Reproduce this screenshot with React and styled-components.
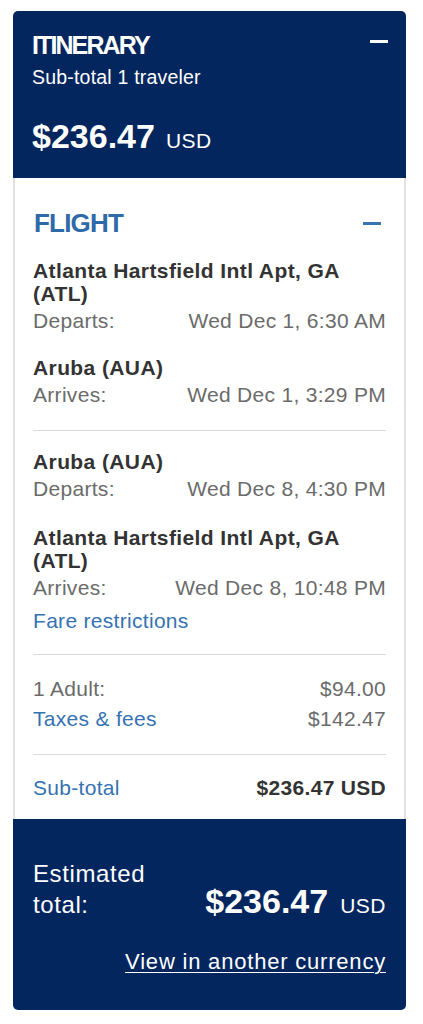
import React from "react";
import styled, { createGlobalStyle } from "styled-components";

const Global = createGlobalStyle`
  html, body { margin: 0; padding: 0; background: #ffffff; }
  body { font-family: "Liberation Sans", Arial, Helvetica, sans-serif; -webkit-font-smoothing: antialiased; }
`;

const NAVY = "#03265f";
const BLUE = "#3572b2";

const Page = styled.div`
  padding: 11px 17px 14px 13px;
`;

const Card = styled.div`
  width: 393px;
  border-radius: 5px;
  overflow: hidden;
  font-family: "Liberation Sans", Arial, Helvetica, sans-serif;
`;

const Header = styled.header`
  background: ${NAVY};
  color: #fff;
  padding: 20px 18px 22px 19px;
`;

const TitleRow = styled.div`
  display: flex;
  justify-content: space-between;
  align-items: flex-start;
`;

const Title = styled.h2`
  margin: 0;
  font-size: 25px;
  line-height: 28px;
  font-weight: 700;
  letter-spacing: -1.9px;
`;

const Minus = styled.span`
  display: block;
  width: 18px;
  height: 3px;
  margin-top: ${(p) => p.$top}px;
  margin-right: ${(p) => p.$right || 0}px;
  background: ${(p) => p.$color};
  flex: none;
`;

const Subtitle = styled.div`
  margin-top: 7px;
  font-size: 19.5px;
  line-height: 22px;
  letter-spacing: 0.2px;
`;

const PriceRow = styled.div`
  display: flex;
  align-items: baseline;
  gap: ${(p) => p.$gap}px;
  margin-top: ${(p) => p.$top || 0}px;
`;

const BigAmount = styled.span`
  font-size: 34px;
  line-height: ${(p) => p.$lh}px;
  font-weight: 700;
`;

const Currency = styled.span`
  font-size: 21px;
  letter-spacing: 0.5px;
`;

const Body = styled.section`
  background: #fff;
  border-left: 2px solid #e1e1e1;
  border-right: 2px solid #e1e1e1;
  padding: 30px 18px 20px 18px;
`;

const SectionRow = styled.div`
  display: flex;
  justify-content: space-between;
  align-items: flex-start;
`;

const SectionTitle = styled.h3`
  margin: 0 0 0 1px;
  font-size: 26px;
  line-height: 30px;
  font-weight: 700;
  color: #2f6aa8;
  letter-spacing: -0.8px;
`;

const Leg = styled.div`
  margin-top: ${(p) => p.$top}px;
`;

const Place = styled.div`
  font-size: 21px;
  line-height: 23px;
  font-weight: 700;
  color: #333;
  letter-spacing: 0.4px;
`;

const InfoRow = styled.div`
  display: flex;
  justify-content: space-between;
  margin-top: ${(p) => p.$top || 0}px;
  font-size: 21px;
  line-height: 23px;
  color: #6b6b6b;
  letter-spacing: 0.3px;
`;

const Link = styled.span`
  color: ${BLUE};
`;

const Strong = styled.span`
  color: #333;
  font-weight: 700;
`;

const Divider = styled.hr`
  margin: ${(p) => p.$top}px 0 0 0;
  border: 0;
  border-top: 1px solid #dadada;
  height: 0;
`;

const Footer = styled.footer`
  background: ${NAVY};
  color: #fff;
  padding: 39px 20px 35px 20px;
`;

const TotalRow = styled.div`
  display: flex;
  justify-content: space-between;
  align-items: flex-end;
`;

const TotalLabel = styled.div`
  font-size: 24px;
  line-height: 31px;
  letter-spacing: 0.6px;
`;

const CurrencyLink = styled.a`
  display: block;
  margin-top: 29px;
  text-align: right;
  font-size: 22px;
  line-height: 26px;
  letter-spacing: 0.8px;
  color: #fff;
  text-decoration: underline;
  text-decoration-thickness: 1px;
  text-underline-offset: 3px;
  cursor: pointer;
`;

const legs = [
  { place: ["Atlanta Hartsfield Intl Apt, GA", "(ATL)"], label: "Departs:", time: "Wed Dec 1, 6:30 AM", top: 21 },
  { place: ["Aruba (AUA)"], label: "Arrives:", time: "Wed Dec 1, 3:29 PM", top: 24 },
];
const legsBack = [
  { place: ["Aruba (AUA)"], label: "Departs:", time: "Wed Dec 8, 4:30 PM", top: 19 },
  { place: ["Atlanta Hartsfield Intl Apt, GA", "(ATL)"], label: "Arrives:", time: "Wed Dec 8, 10:48 PM", top: 26 },
];

function LegBlock({ leg }) {
  return (
    <Leg $top={leg.top}>
      <Place>
        {leg.place.map((l, i) => (
          <div key={i}>{l}</div>
        ))}
      </Place>
      <InfoRow $top={4}>
        <span>{leg.label}</span>
        <span>{leg.time}</span>
      </InfoRow>
    </Leg>
  );
}

export default function App() {
  return (
    <Page>
      <Global />
      <Card>
        <Header>
          <TitleRow>
            <Title>ITINERARY</Title>
            <Minus $top={9} $color="#fff" />
          </TitleRow>
          <Subtitle>Sub-total 1 traveler</Subtitle>
          <PriceRow $gap={11} $top={28}>
            <BigAmount $lh={40}>$236.47</BigAmount>
            <Currency>USD</Currency>
          </PriceRow>
        </Header>

        <Body>
          <SectionRow>
            <SectionTitle>FLIGHT</SectionTitle>
            <Minus $top={14} $right={5} $color="#3a74b0" />
          </SectionRow>

          {legs.map((leg, i) => (
            <LegBlock key={i} leg={leg} />
          ))}

          <Divider $top={24} />

          {legsBack.map((leg, i) => (
            <LegBlock key={i} leg={leg} />
          ))}

          <InfoRow $top={10}>
            <Link>Fare restrictions</Link>
          </InfoRow>

          <Divider $top={22} />

          <InfoRow $top={22}>
            <span>1 Adult:</span>
            <span>$94.00</span>
          </InfoRow>
          <InfoRow $top={7}>
            <Link>Taxes &amp; fees</Link>
            <span>$142.47</span>
          </InfoRow>

          <Divider $top={24} />

          <InfoRow $top={21}>
            <Link>Sub-total</Link>
            <Strong>$236.47 USD</Strong>
          </InfoRow>
        </Body>

        <Footer>
          <TotalRow>
            <TotalLabel>
              Estimated
              <br />
              total:
            </TotalLabel>
            <PriceRow $gap={12}>
              <BigAmount $lh={38}>$236.47</BigAmount>
              <Currency>USD</Currency>
            </PriceRow>
          </TotalRow>
          <CurrencyLink>View in another currency</CurrencyLink>
        </Footer>
      </Card>
    </Page>
  );
}
